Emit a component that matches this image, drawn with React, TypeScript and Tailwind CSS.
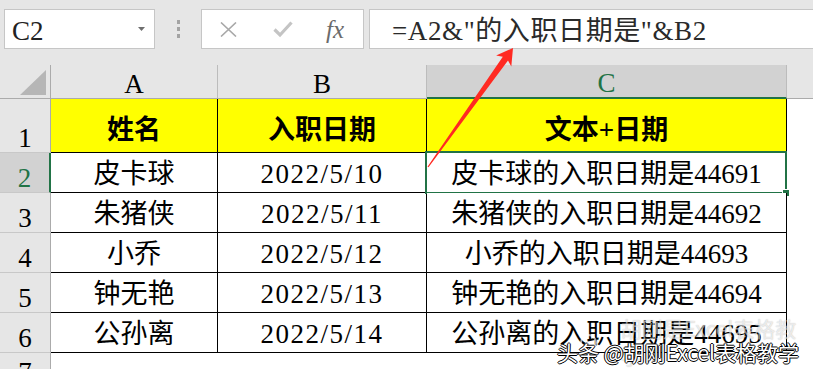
import React from "react";

const ROWS = [
  { n: 2, name: "皮卡球", date: "2022/5/10", text: "皮卡球的入职日期是44691" },
  { n: 3, name: "朱猪侠", date: "2022/5/11", text: "朱猪侠的入职日期是44692" },
  { n: 4, name: "小乔", date: "2022/5/12", text: "小乔的入职日期是44693" },
  { n: 5, name: "钟无艳", date: "2022/5/13", text: "钟无艳的入职日期是44694" },
  { n: 6, name: "公孙离", date: "2022/5/14", text: "公孙离的入职日期是44695" },
];

function FormulaBar() {
  return (
    <div className="flex h-[65px] items-start pl-[4px] pt-[9px]">
      <div className="flex h-[40px] w-[151px] items-start border border-[#c6c6c6] bg-white pl-[7px] pt-[8px] text-[27px] leading-[27px] text-[#222]">
        <span>C2</span>
        <svg className="ml-auto mr-[9px] mt-[9px]" width="7" height="4" viewBox="0 0 7 4">
          <path d="M0 0H7L3.5 4Z" fill="#6e6e6e" />
        </svg>
      </div>
      <div className="flex h-[40px] w-[46px] flex-col items-center justify-center gap-[3px]">
        <span className="h-[4px] w-[3px] bg-[#a3a3a3]" />
        <span className="h-[4px] w-[3px] bg-[#a3a3a3]" />
        <span className="h-[4px] w-[3px] bg-[#a3a3a3]" />
      </div>
      <div className="flex h-[40px] w-[163px] items-center border border-[#c6c6c6] bg-white pl-[18px]">
        <svg width="17" height="15" viewBox="0 0 17 15">
          <path d="M1 0.5L16 14.5M16 0.5L1 14.5" stroke="#a8a8a8" strokeWidth="1.6" />
        </svg>
        <svg className="ml-[36px]" width="20" height="17" viewBox="0 0 20 17">
          <path d="M1.5 8.5L7 14L18.5 1.5" fill="none" stroke="#c4c4c4" strokeWidth="3.2" />
        </svg>
        <span className="ml-[33px] font-['Liberation_Serif',serif] text-[25px] italic leading-[25px] text-[#6b6b6b]">
          fx
        </span>
      </div>
      <div className="ml-[5px] flex h-[40px] flex-1 items-start border border-r-0 border-[#c6c6c6] bg-white pl-[22px] pt-[8px] text-[27px] leading-[27px] tracking-[0.6px] text-[#2a2a2a]">
        =A2&amp;"的入职日期是"&amp;B2
      </div>
    </div>
  );
}

function Sheet() {
  const colHead = "flex items-end justify-center border-b border-r border-b-[#ababab] border-r-[#bcbcbc]";
  const rowHead = "flex items-end justify-center border-b border-r border-b-[#c8c8c8] border-r-[#ababab] bg-[#e6e6e6]";
  const cell = "flex items-end justify-center border-b border-r border-black bg-white pb-[4px]";
  const title = "flex items-end justify-center border-b border-r border-black bg-[#ffff00] pb-[8px] font-bold";

  return (
    <div className="grid grid-cols-[51px_167px_209px_360px_1fr] grid-rows-[34px_54px_40px_40px_40px_40px_40px_34px] text-[27px] leading-[27px] text-black">
      <div className="relative border-b border-r border-[#ababab] bg-[#e6e6e6]">
        <svg className="absolute bottom-[3px] right-[4px]" width="26" height="25" viewBox="0 0 26 25">
          <path d="M26 0V25H0Z" fill="#b6b6b6" />
        </svg>
      </div>
      <div className={colHead}>A</div>
      <div className={colHead}>B</div>
      <div className="flex items-end justify-center border-b-2 border-r border-b-[#217346] border-r-[#bcbcbc] bg-[#d2d2d2] text-[#217346]">
        C
      </div>
      <div className="border-b border-b-[#ababab] bg-[#e6e6e6]" />

      <div className={rowHead}>1</div>
      <div className={title}>姓名</div>
      <div className={title}>入职日期</div>
      <div className={title}>文本+日期</div>
      <div className="bg-white" />

      {ROWS.map((row) => (
        <React.Fragment key={row.n}>
          {row.n === 2 ? (
            <div className="flex items-end justify-center border-b border-r-2 border-b-[#c8c8c8] border-r-[#217346] bg-[#d2d2d2] text-[#217346]">
              {row.n}
            </div>
          ) : (
            <div className={rowHead}>{row.n}</div>
          )}
          <div className={cell}>{row.name}</div>
          <div className={`${cell} tracking-[1.5px]`}>{row.date}</div>
          <div className={`${cell} relative`}>
            {row.text}
            {row.n === 2 ? (
              <>
                <div className="absolute -left-[2px] -top-[2px] h-[43px] w-[362px] border-2 border-[#217346]" />
                <div className="absolute left-[355px] top-[36px] h-[8px] w-[8px] border border-white bg-[#217346]" />
              </>
            ) : null}
          </div>
          <div className="bg-white" />
        </React.Fragment>
      ))}

      <div className={rowHead}>7</div>
      <div className="bg-white" />
      <div className="bg-white" />
      <div className="bg-white" />
      <div className="bg-white" />
    </div>
  );
}

export default function App() {
  return (
    <div className="relative h-[369px] w-[813px] overflow-hidden bg-[#e6e6e6] font-['Liberation_Serif','Noto_Sans_CJK_SC',serif]">
      <FormulaBar />
      <Sheet />

      {/* red pointer from C2 up to the formula */}
      <svg className="pointer-events-none absolute left-0 top-0" width="813" height="369" viewBox="0 0 813 369">
        <polygon
          points="428.5,167.3 508,60.5 511.3,66.5 513,48 496.1,55.5 502.8,56.7 427.5,166.7"
          fill="#ff2a22"
        />
      </svg>

      {/* watermark */}
      <div className="pointer-events-none absolute left-[580px] top-[315px] flex items-center gap-[4px] font-['Noto_Sans_CJK_SC',sans-serif] text-[21px] leading-[27px] text-white/70 opacity-80 [text-shadow:0_0_1px_rgba(0,0,0,0.35)]">
        <span className="h-[17px] w-[17px] rounded-full border-2 border-white/80" />
        <span className="ml-[20px]">胡刚是Excel表格教学</span>
      </div>
      <div className="pointer-events-none absolute left-[557px] top-[339px] font-['Noto_Sans_CJK_SC',sans-serif] text-[21px] leading-[27px] text-white [text-shadow:1px_0_0_#000,-1px_0_0_#000,0_1px_0_#000,0_-1px_0_#000]">
        头条 @胡刚Excel表格教学
      </div>
    </div>
  );
}
